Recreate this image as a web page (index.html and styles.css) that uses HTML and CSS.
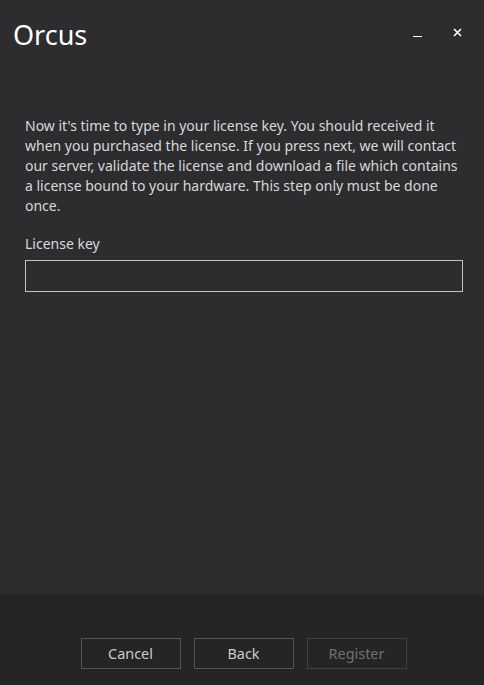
FILE: index.html
```html
<!DOCTYPE html>
<html>
<head>
<meta charset="utf-8">
<link rel="stylesheet" href="styles.css">
</head>
<body>
<div class="window">
  <header class="titlebar">
    <div class="title">Orcus</div>
    <div class="controls">
      <span class="ctl min"><svg width="10" height="10" viewBox="0 0 10 10"><rect x="0" y="8" width="9" height="1" fill="#fff"/></svg></span>
      <span class="ctl close"><svg width="10" height="10" viewBox="0 0 10 10"><path d="M1 1 L8 8 M8 1 L1 8" stroke="#fff" stroke-width="1.6"/></svg></span>
    </div>
  </header>
  <main class="content">
    <p class="desc">Now it's time to type in your license key. You should received it when you purchased the license. If you press next, we will contact our server, validate the license and download a file which contains a license bound to your hardware. This step only must be done once.</p>
    <label class="label">License key</label>
    <input class="input" type="text">
  </main>
  <footer class="footer">
    <button class="btn">Cancel</button>
    <button class="btn">Back</button>
    <button class="btn disabled">Register</button>
  </footer>
</div>
</body>
</html>
```

FILE: styles.css
```css
html, body {
  margin: 0;
  padding: 0;
  background: #2d2d30;
}
.window {
  width: 484px;
  height: 685px;
  display: flex;
  flex-direction: column;
  font-family: "Noto Sans", "Open Sans", sans-serif;
  color: #d4d4d4;
}
.titlebar {
  height: 70px;
  display: flex;
  justify-content: space-between;
  align-items: flex-start;
  padding: 0 21px 0 13px;
}
.title {
  font-size: 27px;
  color: #fff;
  margin-top: 17px;
  line-height: 36px;
}
.controls {
  display: flex;
  gap: 30px;
  margin-top: 28px;
}
.ctl {
  width: 10px;
  height: 10px;
  display: block;
}
.ctl svg { display: block; }
.content {
  flex: 1;
  padding: 46px 15px 0 25px;
}
.desc {
  margin: 0;
  font-size: 14px;
  line-height: 20px;
  color: #d8d8d8;
}
.label {
  display: block;
  margin-top: 18px;
  font-size: 14px;
  line-height: 20px;
  color: #d8d8d8;
}
.input {
  display: block;
  box-sizing: border-box;
  width: 438px;
  height: 32px;
  margin-top: 6px;
  background: transparent;
  border: 1px solid #c4c4c4;
  outline: none;
}
.footer {
  height: 91px;
  background: #252526;
  display: flex;
  justify-content: center;
  align-items: flex-start;
  gap: 13px;
  padding-top: 44px;
  box-sizing: border-box;
  padding-left: 3px;
}
.btn {
  width: 100px;
  height: 31px;
  background: transparent;
  border: 1px solid #545454;
  color: #cccccc;
  font-family: "Noto Sans", "Open Sans", sans-serif;
  font-size: 14.4px;
  padding: 0;
}
.btn.disabled {
  color: #707070;
  border-color: #404040;
}
```
